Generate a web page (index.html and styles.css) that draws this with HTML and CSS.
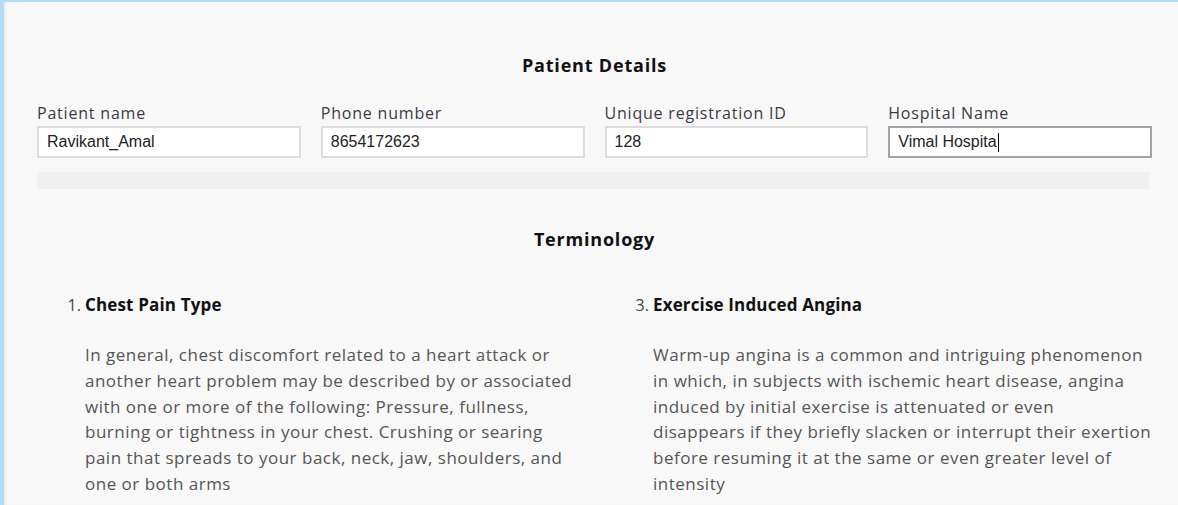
FILE: index.html
```html
<!DOCTYPE html>
<html lang="en">
<head>
<meta charset="utf-8">
<title>Patient Details</title>
<link rel="stylesheet" href="styles.css">
</head>
<body>
<div class="frame">
  <main class="page">
    <h2 class="section-title">Patient Details</h2>
    <div class="fields">
      <label class="field">
        <span class="field-label">Patient name</span>
        <input class="field-input" type="text" value="Ravikant_Amal">
      </label>
      <label class="field">
        <span class="field-label">Phone number</span>
        <input class="field-input" type="text" value="8654172623">
      </label>
      <label class="field">
        <span class="field-label">Unique registration ID</span>
        <input class="field-input" type="text" value="128">
      </label>
      <div class="field">
        <span class="field-label">Hospital Name</span>
        <div class="field-input is-focused"><span>Vimal Hospita</span><span class="caret"></span></div>
      </div>
    </div>
    <div class="divider-bar"></div>

    <h2 class="section-title terms-title">Terminology</h2>
    <div class="terms">
      <ol class="term-list" start="1">
        <li class="term">
          <strong class="term-name">Chest Pain Type</strong>
          <p class="term-desc">In general, chest discomfort related to a heart attack or<br>another heart problem may be described by or associated<br>with one or more of the following: Pressure, fullness,<br>burning or tightness in your chest. Crushing or searing<br>pain that spreads to your back, neck, jaw, shoulders, and<br>one or both arms</p>
        </li>
      </ol>
      <ol class="term-list" start="3">
        <li class="term">
          <strong class="term-name">Exercise Induced Angina</strong>
          <p class="term-desc">Warm-up angina is a common and intriguing phenomenon<br>in which, in subjects with ischemic heart disease, angina<br>induced by initial exercise is attenuated or even<br>disappears if they briefly slacken or interrupt their exertion<br>before resuming it at the same or even greater level of<br>intensity</p>
        </li>
      </ol>
    </div>
  </main>
</div>
</body>
</html>
```

FILE: styles.css
```css
html, body {
  margin: 0;
  padding: 0;
  height: 100%;
}

body {
  background: #f8f8f8;
  font-family: "Open Sans", "Noto Sans", sans-serif;
  color: #333;
  overflow: hidden;
}

.frame {
  min-height: 100%;
  box-sizing: border-box;
  border-top: 2px solid #b3dcfb;
  border-left: 4px solid #b3dcfb;
  box-shadow: inset 3px 0 3px -1px rgba(0, 0, 0, 0.06);
}

.page {
  width: 1115px;
  margin-left: 33px;
  padding-top: 51px;
}

.section-title {
  margin: 0;
  text-align: center;
  font-family: "Open Sans", sans-serif;
  font-weight: 700;
  font-size: 18px;
  line-height: 24px;
  letter-spacing: 0.8px;
  color: #111;
}

.fields {
  display: grid;
  grid-template-columns: repeat(4, 1fr);
  gap: 20px;
  margin-top: 26px;
}

.field {
  display: flex;
  flex-direction: column;
}

.field-label {
  font-size: 16px;
  line-height: 20px;
  color: #3d3a45;
  margin-bottom: 3px;
  letter-spacing: 0.8px;
}

.field-input {
  box-sizing: border-box;
  height: 32px;
  width: 100%;
  margin: 0;
  border: 2px solid #dcdcdc;
  background: #fff;
  padding: 0 8px;
  font-family: "Liberation Sans", Arial, sans-serif;
  font-size: 16px;
  color: #222;
  outline: none;
}

.field-input.is-focused {
  display: flex;
  align-items: center;
  border-color: #a3a3a3;
}

.caret {
  display: inline-block;
  width: 1px;
  height: 19px;
  background: #000;
  margin-left: 1px;
}

.divider-bar {
  width: 1112px;
  height: 17px;
  margin-top: 14px;
  background: #f0f0f0;
}

.terms-title {
  margin-top: 38px;
}

.terms {
  display: grid;
  grid-template-columns: 1fr 1fr;
  gap: 21px;
  margin-top: 41px;
}

.term-list {
  margin: 0;
  padding-left: 48px;
}

.term {
  font-size: 17px;
  line-height: 26px;
  color: #555;
}

.term::marker {
  color: #444;
  font-size: 16px;
}

.term-name {
  font-weight: 700;
  letter-spacing: 0.15px;
  color: #111;
}

.term-desc {
  margin: 24px 0 0;
  font-size: 17px;
  line-height: 25.8px;
  letter-spacing: 0.5px;
  color: #555;
}
```
